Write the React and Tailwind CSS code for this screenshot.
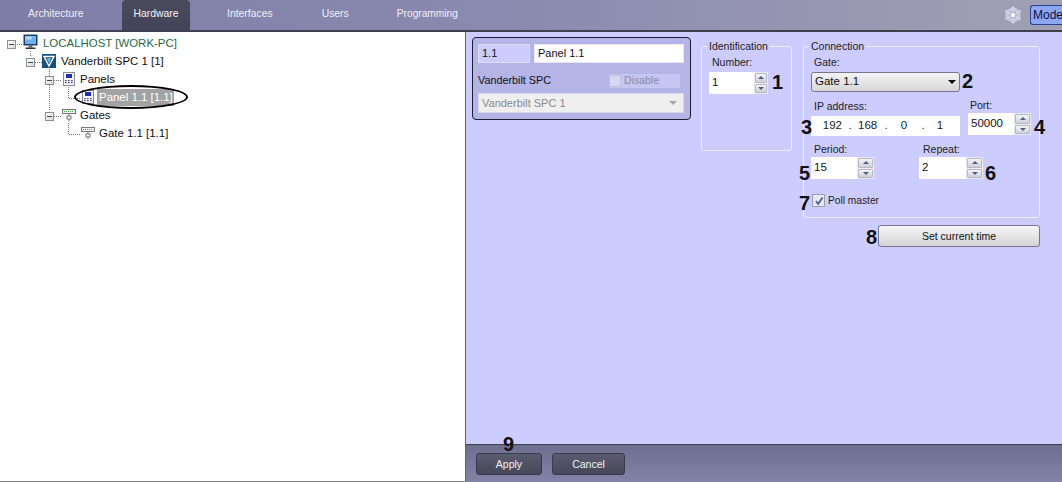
const font = { fontFamily: '"Liberation Sans", Arial, sans-serif' };

function Monitor() {
  return (
    <svg width="15" height="18" viewBox="0 0 15 18" className="shrink-0">
      <rect x="0.5" y="0.5" width="14" height="11" fill="#1d3b6b" />
      <rect x="2" y="2" width="11" height="8" fill="#6fb4e8" />
      <rect x="2.5" y="2.5" width="6" height="3" fill="#b5dcf6" />
      <rect x="5.5" y="11.5" width="4" height="2" fill="#666" />
      <rect x="2.5" y="13.5" width="10" height="1.5" fill="#333" />
    </svg>
  );
}
function Shield() {
  return (
    <svg width="14" height="14" viewBox="0 0 14 14" className="shrink-0">
      <rect width="14" height="14" fill="#17517f" />
      <path d="M2 2.5 H12 L7 12 Z" fill="none" stroke="#fff" strokeWidth="1.4" />
      <path d="M4.6 4.2 H9.4 L7 9 Z" fill="#6fc0e0" />
    </svg>
  );
}
function PanelIcon() {
  return (
    <svg width="12" height="14" viewBox="0 0 12 14" className="shrink-0">
      <rect x="0.5" y="0.5" width="11" height="13" fill="#f4f4f8" stroke="#8a8a98" />
      <rect x="3" y="2" width="6" height="4" fill="#1c2fc0" />
      <g fill="#444a80">
        <rect x="2" y="8" width="1.6" height="1.2" /><rect x="5" y="8" width="1.6" height="1.2" /><rect x="8" y="8" width="1.6" height="1.2" />
        <rect x="2" y="10" width="1.6" height="1.2" /><rect x="5" y="10" width="1.6" height="1.2" /><rect x="8" y="10" width="1.6" height="1.2" />
      </g>
    </svg>
  );
}
function GateIcon() {
  return (
    <svg width="14" height="14" viewBox="0 0 14 14" className="shrink-0">
      <rect x="0.5" y="1.5" width="13" height="4" fill="#eef4ee" stroke="#777" />
      <path d="M2 3.5 H12" stroke="#3fa84a" strokeDasharray="1 1" />
      <path d="M7 6 V13" stroke="#777" />
      <rect x="5" y="8" width="4" height="3" fill="#fff" stroke="#777" />
    </svg>
  );
}
function Minus() {
  return (
    <span className="w-[9px] h-[9px] translate-y-[1px] border border-[#8a8f98] bg-gradient-to-br from-white to-[#d8d8d8] flex items-center justify-center shrink-0 relative z-10">
      <span className="w-[5px] h-px bg-[#444]" />
    </span>
  );
}
function TreeRow({ pad, icon, iconMl, text, textMl, cls = "text-[#111]", expander = true }) {
  return (
    <div className="h-[18px] flex items-center" style={{ paddingLeft: pad }}>
      {expander && <Minus />}
      <span className="flex shrink-0" style={{ marginLeft: iconMl }}>{icon}</span>
      {text}
    </div>
  );
}
function T({ children, ml, cls = "text-[#111]" }) {
  return <span className={`text-[11.45px] leading-[16px] whitespace-nowrap ${cls}`} style={{ marginLeft: ml }}>{children}</span>;
}
function Spinner({ w = 17 }) {
  return (
    <div className="h-[22px] flex flex-col justify-between bg-[#f0f0f0] border border-[#e8e8f0] shrink-0" style={{ width: w }}>
      <div className="flex-1 mb-px bg-gradient-to-b from-[#f4f4f4] to-[#cfcfdc] border border-[#b8b8c4] rounded-[1px] flex items-center justify-center">
        <span className="w-0 h-0 border-x-[3px] border-x-transparent border-b-[3px] border-b-[#4a6080]" />
      </div>
      <div className="flex-1 bg-gradient-to-b from-[#f4f4f4] to-[#cfcfdc] border border-[#b8b8c4] rounded-[1px] flex items-center justify-center">
        <span className="w-0 h-0 border-x-[3px] border-x-transparent border-t-[3px] border-t-[#4a6080]" />
      </div>
    </div>
  );
}
function SpinBox({ value, w, sw }) {
  return (
    <div className="flex bg-white h-[22px]" style={{ width: w }}>
      <span className="flex-1 pl-[3px] text-[11.5px] leading-[20px] text-[#111]">{value}</span>
      <Spinner w={sw} />
    </div>
  );
}
function Num({ n, x, y }) {
  return (
    <span className="absolute font-bold text-[20px] leading-[20px] text-[#111]" style={{ left: x, top: y }}>{n}</span>
  );
}
function Label({ children, cls = "" }) {
  return <div className={`text-[10.5px] leading-[13px] text-[#222] whitespace-nowrap ${cls}`}>{children}</div>;
}

export default function App() {
  return (
    <div className="w-[1062px] h-[482px] overflow-hidden relative flex flex-col bg-white" style={font}>
      {/* top bar */}
      <div className="h-[32px] shrink-0 flex items-end border-b-2 border-[#3f3f50] bg-gradient-to-r from-[#7d7da8] via-[#8b8bb0] to-[#a0a0b4] pl-[28px]">
        <span className="w-[56px] h-[30px] text-[10.4px] leading-[27px] text-[#f0f0f6] whitespace-nowrap">Architecture</span>
        <span className="ml-[38px] w-[68px] h-[30px] rounded-t-[4px] bg-gradient-to-b from-[#4a4a5c] to-[#44445a] text-[10.4px] leading-[27px] text-[#f4f4f8] text-center">Hardware</span>
        <span className="ml-[37px] h-[30px] text-[10.4px] leading-[27px] text-[#f0f0f6]">Interfaces</span>
        <span className="ml-[49px] h-[30px] text-[10.4px] leading-[27px] text-[#f0f0f6]">Users</span>
        <span className="ml-[48px] h-[30px] text-[10.2px] leading-[27px] text-[#f0f0f6]">Programming</span>
        <div className="ml-auto h-[30px] flex items-start gap-[7px] pt-[5px]">
          <svg width="20" height="20" viewBox="0 0 20 20">
            <path d="M10 1 L18 5.5 V14.5 L10 19 L2 14.5 V5.5 Z" fill="#c8c8dc" stroke="#9a9ab4" />
            <circle cx="10" cy="10" r="3" fill="#f4f4fa" stroke="#a0a0b8" />
            <path d="M10 1 V7 M18 5.5 L12.6 8.5 M18 14.5 L12.6 11.5 M10 19 V13 M2 14.5 L7.4 11.5 M2 5.5 L7.4 8.5" stroke="#dcdcec" />
          </svg>
          <span className="w-[32px] h-[20px] overflow-hidden rounded-l-[3px] border border-r-0 border-[#2a3f9a] bg-[#8fa6f4] text-[12px] leading-[18px] pl-[2px] text-[#10103a]">Mode</span>
        </div>
      </div>

      <div className="flex-1 min-h-0 flex">
        {/* tree */}
        <div className="w-[466px] shrink-0 border-r border-b border-r-[#60607a] border-b-[#8a8a8a] bg-white pt-[2px] relative">
          <svg className="absolute left-0 top-0" width="180" height="150">
            <g stroke="#777" strokeDasharray="1 1" fill="none">
              <path d="M17 12.5 H23" />
              <path d="M30.5 19 V24" />
              <path d="M35 30.5 H42" />
              <path d="M49.5 37 V79" />
              <path d="M54 48.5 H62" />
              <path d="M54 84.5 H62" />
              <path d="M68.5 55 V66.5 H80" />
              <path d="M68.5 91 V102.5 H80" />
            </g>
          </svg>
          <div className="relative">
            <TreeRow pad={7} iconMl={7} icon={<Monitor />} text={<T ml={5} cls="text-[#1f6a4a]">LOCALHOST [WORK-PC]</T>} />
            <TreeRow pad={26} iconMl={7} icon={<Shield />} text={<T ml={5}>Vanderbilt SPC 1 [1]</T>} />
            <TreeRow pad={45} iconMl={9} icon={<PanelIcon />} text={<T ml={5}>Panels</T>} />
            <TreeRow pad={82} expander={false} icon={<PanelIcon />} text={
              <span className="ml-[3px] h-[17px] w-[77px] bg-[#a3a3a3] text-white text-[11.45px] leading-[17px] pl-[2px] whitespace-nowrap">Panel 1.1 [1.1]</span>
            } />
            <TreeRow pad={45} iconMl={8} icon={<GateIcon />} text={<T ml={4}>Gates</T>} />
            <TreeRow pad={81} expander={false} icon={<GateIcon />} text={<T ml={4}>Gate 1.1 [1.1]</T>} />
          </div>
          {/* callout ellipse */}
          <span className="absolute left-[74px] top-[53px] w-[114px] h-[24px] rounded-[50%] border-2 border-black" />
        </div>

        {/* right side */}
        <div className="flex-1 min-w-0 flex flex-col">
          <div className="flex-1 min-h-0 bg-[#ccccff] relative flex items-start pl-[6px] pt-[5px]">
            {/* object card */}
            <div className="w-[219px] h-[83px] shrink-0 rounded-[4px] border border-[#1c1c30] bg-[#b4b4e6] pt-[6px] px-[5px]">
              <div className="flex gap-[4px]">
                <div className="w-[52px] h-[19px] border border-[#dcdcf4] bg-[#ccccff] text-[11px] leading-[17px] pl-[3px] text-[#111]">1.1</div>
                <div className="w-[150px] h-[19px] border border-[#e6e6f6] bg-white text-[11px] leading-[17px] pl-[3px] text-[#111]">Panel 1.1</div>
              </div>
              <div className="flex items-center justify-between h-[15px] mt-[10px]">
                <span className="text-[10.8px] text-[#111]">Vanderbilt SPC</span>
                <div className="w-[71px] h-[14px] bg-[#c6c6f2] flex items-center gap-[3px] mr-[5px]">
                  <span className="w-[12px] h-[12px] bg-[#d8d8f4] border border-[#c0c0dc]" />
                  <span className="text-[10.5px] text-[#8a8aa0]">Disable</span>
                </div>
              </div>
              <div className="h-[20px] w-[206px] mt-[5px] bg-[#efefef] border border-[#d8d8e4] flex items-center justify-between pl-[3px] pr-[6px]">
                <span className="text-[11px] text-[#8a8a8a]">Vanderbilt SPC 1</span>
                <span className="w-0 h-0 border-x-[4px] border-x-transparent border-t-[4px] border-t-[#a8a8a8]" />
              </div>
            </div>

            {/* Identification */}
            <div className="w-[91px] h-[105px] shrink-0 ml-[10px] mt-[9px] rounded-[3px] border border-[#eeeeff] relative pt-[9px] pl-[7px]">
              <span className="absolute left-[5px] -top-[7px] bg-[#ccccff] px-[2px] text-[10.5px] leading-[13px] text-[#222]">Identification</span>
              <Label cls="ml-[3px]">Number:</Label>
              <div className="mt-[3px]"><SpinBox value="1" w={59} sw={14} /></div>
            </div>

            {/* Connection */}
            <div className="w-[237px] h-[172px] shrink-0 ml-[11px] mt-[9px] rounded-[3px] border border-[#eeeeff] relative pt-[9px] pl-[7px] pr-[8px]">
              <span className="absolute left-[5px] -top-[7px] bg-[#ccccff] px-[2px] text-[10.5px] leading-[13px] text-[#222]">Connection</span>
              <Label cls="ml-[3px]">Gate:</Label>
              <div className="mt-[3px] w-[149px] h-[20px] rounded-[3px] border border-[#77778a] bg-gradient-to-b from-[#f4f4f4] to-[#d6d6d6] flex items-center justify-between pl-[3px] pr-[2px]">
                <span className="text-[11.5px] text-[#111]">Gate 1.1</span>
                <span className="w-0 h-0 border-x-[4px] border-x-transparent border-t-[4px] border-t-black mr-[1px]" />
              </div>
              <div className="flex mt-[7px]">
                <div className="w-[157px]">
                  <Label cls="ml-[3px] mt-[1px]">IP address:</Label>
                  <div className="mt-[3px] w-[149px] h-[20px] bg-white flex items-center text-[11.5px] text-[#222]">
                    <span className="w-[31px] text-right">192</span><span className="w-[16px] text-center">.</span>
                    <span className="w-[19px] text-center">168</span><span className="w-[18px] text-center">.</span>
                    <span className="w-[18px] text-center">0</span><span className="w-[20px] text-center">.</span>
                    <span className="w-[14px] text-center">1</span>
                  </div>
                </div>
                <div>
                  <Label cls="ml-[2px]">Port:</Label>
                  <div className="mt-[1px]"><SpinBox value="50000" w={63} /></div>
                </div>
              </div>
              <div className="flex mt-[7px]">
                <div className="w-[108px]">
                  <Label cls="ml-[3px]">Period:</Label>
                  <div className="mt-[1px]"><SpinBox value="15" w={63} /></div>
                </div>
                <div>
                  <Label cls="ml-[4px]">Repeat:</Label>
                  <div className="mt-[1px]"><SpinBox value="2" w={64} /></div>
                </div>
              </div>
              <div className="flex items-center gap-[3px] mt-[14px] ml-[1px]">
                <span className="w-[13px] h-[13px] border border-[#9c9cb4] bg-[#e8e8f0] flex items-center justify-center">
                  <svg width="10" height="10" viewBox="0 0 10 10"><path d="M2 5 L4.2 8 L8.5 1.5" fill="none" stroke="#4a5f9a" strokeWidth="1.8" /></svg>
                </span>
                <span className="text-[10.2px] text-[#222]">Poll master</span>
              </div>
              {/* Set current time hangs below the group */}
              <div className="absolute left-[74px] top-[178px] w-[162px] h-[22px] rounded-[3px] border border-[#77778a] bg-gradient-to-b from-[#f6f6f6] to-[#d4d4d4] text-center text-[10.5px] leading-[20px] text-[#111]">Set current time</div>
            </div>

            {/* callout numbers */}
            <Num n="1" x={306} y={40} />
            <Num n="2" x={496} y={39} />
            <Num n="3" x={335} y={85} />
            <Num n="4" x={568} y={85} />
            <Num n="5" x={333} y={131} />
            <Num n="6" x={519} y={131} />
            <Num n="7" x={333} y={161} />
            <Num n="8" x={400} y={195} />
            <span className="absolute left-[37px] bottom-[-10px] font-bold text-[20px] leading-[20px] text-[#111] z-10">9</span>
          </div>

          {/* footer */}
          <div className="h-[38px] shrink-0 border-t border-[#3f3f50] bg-gradient-to-b from-[#6e6e90] to-[#8383a8] flex items-start gap-[10px] pl-[10px] pt-[8px]">
            <span className="w-[66px] h-[22px] rounded-[3px] border border-[#3a3a4c] bg-gradient-to-b from-[#5c5c70] to-[#47475a] text-center text-[10.5px] leading-[20px] text-[#f0f0f6]">Apply</span>
            <span className="w-[73px] h-[22px] rounded-[3px] border border-[#3a3a4c] bg-gradient-to-b from-[#5c5c70] to-[#47475a] text-center text-[10.5px] leading-[20px] text-[#f0f0f6]">Cancel</span>
          </div>
        </div>
      </div>
    </div>
  );
}
